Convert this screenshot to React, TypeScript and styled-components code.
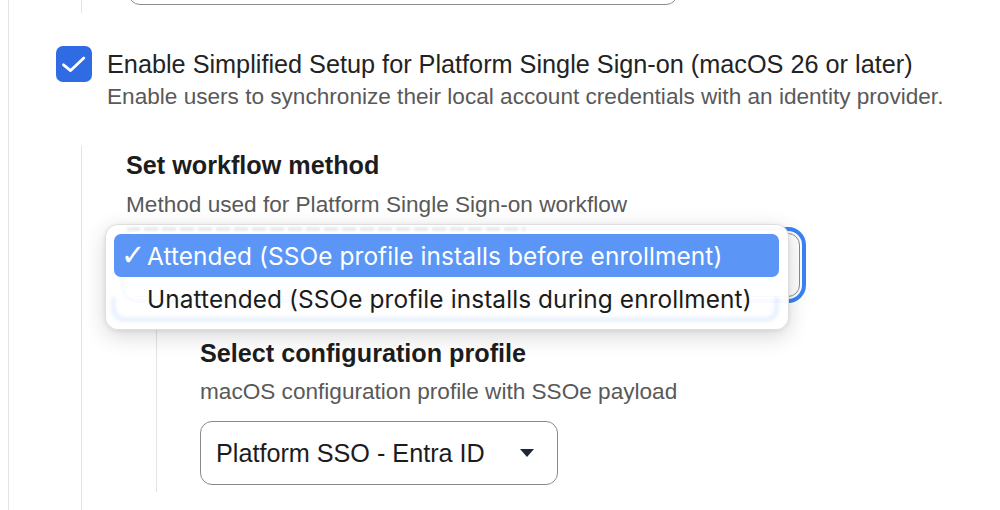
import styled, { createGlobalStyle } from 'styled-components';

const GlobalStyle = createGlobalStyle`
  html, body {
    margin: 0;
    padding: 0;
    background: #ffffff;
    overflow: hidden;
  }

  body {
    font-family: "Liberation Sans", Arial, sans-serif;
    color: #1f1f1f;
  }

  * {
    box-sizing: border-box;
  }
`;

const MENU_OPTIONS = [
  'Attended (SSOe profile installs before enrollment)',
  'Unattended (SSOe profile installs during enrollment)',
];

const App = () => {
  return (
    <>
      <GlobalStyle />
      <Page>
        <PrevSection>
          <PrevSelect />
        </PrevSection>

        <OptionRow>
          <Checkbox>
            <svg width="36" height="36" viewBox="0 0 36 36">
              <path
                d="M7.5 18.8 L14.6 24.6 L27.8 12"
                fill="none"
                stroke="#ffffff"
                strokeWidth="2.8"
                strokeLinecap="round"
                strokeLinejoin="round"
              />
            </svg>
          </Checkbox>
          <OptionText>
            <OptionTitle>Enable Simplified Setup for Platform Single Sign-on (macOS 26 or later)</OptionTitle>
            <OptionHint>Enable users to synchronize their local account credentials with an identity provider.</OptionHint>
          </OptionText>
        </OptionRow>

        <Nested $indent={72} $top={35} $padTop={4} $padLeft={44} $padBottom={40}>
          <FieldLabel>Set workflow method</FieldLabel>
          <FieldHint $gap={11}>Method used for Platform Single Sign-on workflow</FieldHint>
          <SelectWrap $gap={14}>
            <Select $width={674} $focused>
              <span />
              <Caret />
            </Select>
            <Popup>
              <GhostSmear />
              <GhostRing />
              {MENU_OPTIONS.map((option, index) => (
                <MenuItem key={option} $selected={index === 0}>
                  <CheckGutter>{index === 0 ? '✓' : ''}</CheckGutter>
                  <span>{option}</span>
                </MenuItem>
              ))}
            </Popup>
          </SelectWrap>

          <Nested $indent={30} $top={33} $padTop={8} $padLeft={43} $padBottom={7}>
            <FieldLabel>Select configuration profile</FieldLabel>
            <FieldHint $gap={10}>macOS configuration profile with SSOe payload</FieldHint>
            <SelectWrap $gap={15}>
              <Select $width={358}>
                <SelectValue>Platform SSO - Entra ID</SelectValue>
                <Caret />
              </Select>
            </SelectWrap>
          </Nested>
        </Nested>
      </Page>
    </>
  );
};

export default App;

const Page = styled.div`
  margin-left: 8px;
  min-height: 100vh;
  border-left: 1px solid #e4e4e4;
`;

const PrevSection = styled.div`
  margin-left: 72px;
  height: 13px;
  border-left: 1px solid #e4e4e4;
  display: flex;
  align-items: flex-end;
`;

const PrevSelect = styled.div`
  flex-shrink: 0;
  margin-left: 46px;
  margin-bottom: 8px;
  width: 550px;
  height: 64px;
  border: 1.5px solid #8c8c8c;
  border-radius: 12px;
`;

const OptionRow = styled.div`
  margin-top: 33px;
  padding-left: 47px;
  display: flex;
  align-items: flex-start;
  gap: 15px;
`;

const Checkbox = styled.div`
  flex-shrink: 0;
  width: 36px;
  height: 36px;
  border-radius: 7px;
  background: #2f6be3;
  display: flex;
  align-items: center;
  justify-content: center;
`;

const OptionText = styled.div`
  padding-top: 3px;
  display: flex;
  flex-direction: column;
  gap: 4px;
`;

const OptionTitle = styled.div`
  font-size: 25.25px;
  line-height: 30px;
  color: #232323;
  white-space: nowrap;
`;

const OptionHint = styled.div`
  font-size: 22.6px;
  line-height: 28px;
  color: #595959;
  white-space: nowrap;
`;

const Nested = styled.div<{ $indent: number; $top: number; $padTop: number; $padLeft: number; $padBottom: number }>`
  margin-left: ${(p) => p.$indent}px;
  margin-top: ${(p) => p.$top}px;
  padding: ${(p) => p.$padTop}px 0 ${(p) => p.$padBottom}px ${(p) => p.$padLeft}px;
  border-left: 1px solid #e4e4e4;
`;

const FieldLabel = styled.div`
  font-size: 25.2px;
  line-height: 30px;
  font-weight: 700;
  color: #1d1d1d;
  white-space: nowrap;
`;

const FieldHint = styled.div<{ $gap: number }>`
  margin-top: ${(p) => p.$gap}px;
  font-size: 22.6px;
  line-height: 28px;
  color: #595959;
  white-space: nowrap;
`;

const SelectWrap = styled.div<{ $gap: number }>`
  position: relative;
  margin-top: ${(p) => p.$gap}px;
`;

const Select = styled.div<{ $width: number; $focused?: boolean }>`
  width: ${(p) => p.$width}px;
  height: 64px;
  border: 1.5px solid #8a8a8a;
  border-radius: 12px;
  padding: 0 23px 0 15px;
  display: flex;
  align-items: center;
  justify-content: space-between;
  gap: 20px;
  background: #ffffff;
  outline: ${(p) => (p.$focused ? '4px solid #3a82f6' : 'none')};
  outline-offset: 2px;
`;

const SelectValue = styled.span`
  font-size: 25.2px;
  color: #1c1c1c;
  white-space: nowrap;
`;

const Caret = styled.span`
  width: 0;
  height: 0;
  border-left: 7px solid transparent;
  border-right: 7px solid transparent;
  border-top: 8px solid #1e2738;
`;

const Popup = styled.div`
  position: absolute;
  left: -21px;
  top: -9px;
  width: 684px;
  padding: 9px 9px 9px 8px;
  border-radius: 13px;
  border: 1px solid rgba(0, 0, 0, 0.13);
  background: rgba(255, 255, 255, 0.97);
  box-shadow: 0 6px 22px rgba(0, 0, 0, 0.16), 0 1px 4px rgba(0, 0, 0, 0.08);
  z-index: 2;
  overflow: hidden;
`;

const GhostSmear = styled.div`
  position: absolute;
  left: 20px;
  top: 2px;
  width: 400px;
  height: 4px;
  border-radius: 2px;
  background: repeating-linear-gradient(90deg, rgba(140, 140, 140, 0.14) 0 14px, transparent 14px 18px);
  filter: blur(1.2px);
  pointer-events: none;
`;

const GhostRing = styled.div`
  position: absolute;
  left: 6px;
  right: 10px;
  top: 72px;
  height: 24px;
  border: 3px solid rgba(80, 140, 245, 0.2);
  border-top: none;
  border-radius: 0 0 12px 12px;
  filter: blur(2px);
  pointer-events: none;
`;

const MenuItem = styled.div<{ $selected?: boolean }>`
  position: relative;
  height: 43px;
  border-radius: 7px;
  display: flex;
  align-items: center;
  font-family: Inter, "Liberation Sans", sans-serif;
  font-size: 24.4px;
  letter-spacing: 0.1px;
  white-space: nowrap;
  background: ${(p) => (p.$selected ? '#5b96f6' : 'transparent')};
  color: ${(p) => (p.$selected ? '#ffffff' : '#1b1b1b')};
`;

const CheckGutter = styled.span`
  width: 33px;
  flex-shrink: 0;
  padding-left: 7px;
  font-family: "DejaVu Sans", sans-serif;
  font-size: 29px;
  line-height: 1;
`;
